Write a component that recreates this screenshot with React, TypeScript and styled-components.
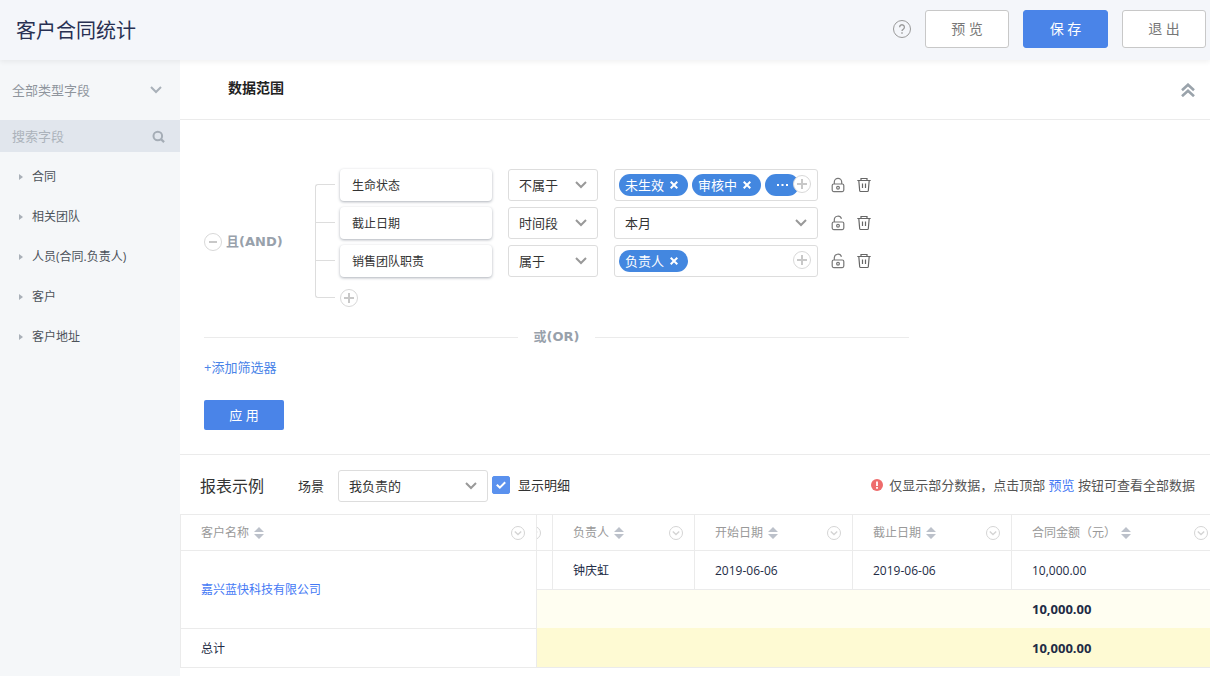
import React from "react";
import styled, { createGlobalStyle, css } from "styled-components";

const GlobalStyle = createGlobalStyle`
  *, *::before, *::after { box-sizing: border-box; }
  body {
    margin: 0;
    background: #fff;
    color: #333;
    font-family: "Open Sans", "Noto Sans CJK SC", sans-serif;
    font-size: 13px;
    line-height: 20px;
  }
  button, input, select { font: inherit; color: inherit; margin: 0; }
  button { cursor: pointer; }
  a { text-decoration: none; }
  h1, h2, ul { margin: 0; padding: 0; }
  svg { display: block; flex: none; }
`;

const Page = styled.div`
  display: flex;
  flex-direction: column;
  min-height: 100vh;
`;

const Header = styled.header`
  display: flex;
  align-items: center;
  gap: 14px;
  height: 60px;
  padding: 0 4px 2px 16px;
  background: #f4f6fa;
  box-shadow: 0 2px 5px rgba(0, 0, 0, 0.06);
  position: relative;
  z-index: 1;
`;

const PageTitle = styled.h1`
  flex: 1;
  padding-top: 4px;
  font-size: 20px;
  line-height: 30px;
  font-weight: 400;
  color: #283052;
`;

const IconButton = styled.button`
  display: grid;
  place-items: center;
  padding: 0;
  border: 0;
  background: none;
`;

const HeaderButton = styled.button<{ $primary?: boolean }>`
  width: ${(p) => (p.$primary ? "85px" : "84px")};
  height: 38px;
  padding: 0;
  border: 1px solid ${(p) => (p.$primary ? "#4a84e8" : "#c8c8c8")};
  border-radius: 3px;
  background: ${(p) => (p.$primary ? "#4a84e8" : "#fff")};
  color: ${(p) => (p.$primary ? "#fff" : "#777")};
  font-size: 14px;
`;

const Body = styled.div`
  display: flex;
  flex: 1;
`;

const Sidebar = styled.aside`
  flex: none;
  width: 180px;
  background: #f5f7f9;
`;

const SelectBox = styled.label<{ $width?: string }>`
  display: grid;
  align-items: center;
  flex: none;
  width: ${(p) => p.$width ?? "100%"};
  > * { grid-area: 1 / 1; }
  > svg { justify-self: end; margin-right: 11px; pointer-events: none; }
`;

const selectReset = css`
  appearance: none;
  width: 100%;
  outline: 0;
`;

const TypeSelect = styled.select`
  ${selectReset}
  height: 60px;
  padding: 0 12px;
  border: 0;
  background: transparent;
  color: #8f959d;
`;

const TypeBox = styled(SelectBox)`
  > svg { margin-right: 18px; }
`;

const Select = styled.select`
  ${selectReset}
  height: 32px;
  padding: 0 10px;
  border: 1px solid #ddd;
  border-radius: 3px;
  background: #fff;
  color: #333;
`;

const SearchBox = styled.label`
  display: flex;
  align-items: center;
  height: 32px;
  padding: 0 15px 0 12px;
  background: #e1e6ed;
  input {
    flex: 1;
    min-width: 0;
    padding: 0;
    border: 0;
    outline: 0;
    background: transparent;
    &::placeholder { color: #acb3bb; opacity: 1; }
  }
`;

const FieldTree = styled.ul`
  padding-top: 5px;
  list-style: none;
`;

const FieldButton = styled.button`
  display: flex;
  align-items: center;
  gap: 9px;
  width: 100%;
  height: 40px;
  padding: 0 19px;
  border: 0;
  background: none;
  color: #4c5259;
  font-size: 12px;
`;

const Main = styled.main`
  flex: 1;
  min-width: 0;
`;

const SectionHeader = styled.div`
  display: flex;
  align-items: center;
  justify-content: space-between;
  height: 60px;
  padding: 0 15px 0 48px;
  border-bottom: 1px solid #ebebeb;
`;

const SectionTitle = styled.h2`
  padding-bottom: 4px;
  font-size: 14px;
  font-weight: 700;
  color: #222;
`;

const FilterPanel = styled.section`
  padding: 48px 24px 24px;
  border-bottom: 1px solid #ebebeb;
`;

const FilterGroup = styled.div`
  display: flex;
`;

const GroupLabel = styled.div`
  display: flex;
  align-items: center;
  gap: 4px;
  width: 111px;
  padding-top: 8px;
`;

const Operator = styled.strong`
  font-family: "DejaVu Sans", "Noto Sans CJK SC", sans-serif;
  font-weight: 700;
  color: #98a1ab;
`;

const Bracket = styled.div`
  width: 20px;
  height: 114px;
  margin: 16px 5px 0 0;
  border: 1px solid #ddd;
  border-right: 0;
  border-radius: 3px 0 0 3px;
`;

const Branch = styled.div`
  height: 38px;
  border-bottom: 1px solid #ddd;
  &:last-child { border-bottom: 0; }
`;

const Conditions = styled.div`
  display: flex;
  flex-direction: column;
  align-items: flex-start;
  gap: 6px;
  padding-top: 1px;
`;

const Condition = styled.div`
  display: flex;
  align-items: center;
  height: 32px;
`;

const FieldCard = styled.div`
  width: 152px;
  height: 32px;
  margin-right: 16px;
  padding: 7px 12px 5px;
  border-radius: 4px;
  background: #fff;
  box-shadow: 0 1px 3px rgba(40, 50, 70, 0.38);
  font-size: 12px;
`;

const ValueArea = styled.div`
  width: 204px;
  margin: 0 13px 0 16px;
`;

const TagField = styled.div`
  position: relative;
  display: flex;
  align-items: center;
  gap: 4px;
  height: 32px;
  padding: 0 4px;
  border: 1px solid #ddd;
  border-radius: 3px;
`;

const Tag = styled.span`
  display: flex;
  align-items: center;
  gap: 6px;
  height: 22px;
  padding: 0 10px 0 6px;
  border-radius: 11px;
  background: #4387e0;
  color: #fff;
  white-space: nowrap;
`;

const MoreTag = styled(Tag)`
  width: 34px;
  padding-left: 12px;
`;

const AddValue = styled(IconButton)`
  position: absolute;
  top: 5px;
  right: 6px;
`;

const AddCondition = styled(IconButton)`
  margin-top: 6px;
`;

const RowActions = styled.div`
  display: flex;
  gap: 12px;
`;

const OrDivider = styled.div`
  display: flex;
  align-items: center;
  gap: 16px;
  max-width: 705px;
  margin-top: 20px;
  &::before, &::after {
    content: "";
    flex: 1;
    height: 1px;
    background: #ebebeb;
  }
`;

const AddFilter = styled.button`
  display: block;
  margin: 10px 0 23px;
  padding: 0;
  border: 0;
  background: none;
  color: #4a84e8;
`;

const ApplyButton = styled.button`
  width: 80px;
  height: 30px;
  padding: 0;
  border: 0;
  border-radius: 2px;
  background: #4a84e8;
  color: #fff;
`;

const ReportBar = styled.div`
  display: flex;
  align-items: center;
  height: 59px;
  padding: 2px 15px 0 20px;
`;

const ReportTitle = styled.h2`
  margin-right: 34px;
  font-size: 16px;
  font-weight: 400;
`;

const SceneLabel = styled.label`
  margin-right: 14px;
`;

const CheckLabel = styled.label`
  display: flex;
  align-items: center;
  gap: 8px;
  margin-left: 4px;
  padding-bottom: 2px;
`;

const CheckMark = styled.span`
  display: grid;
  place-items: center;
  > * { grid-area: 1 / 1; }
  svg { pointer-events: none; }
`;

const CheckInput = styled.input`
  appearance: none;
  width: 18px;
  height: 18px;
  border: 1px solid #ccc;
  border-radius: 2px;
  &:checked { border-color: #5a91ee; background: #5a91ee; }
  &:not(:checked) + svg { display: none; }
`;

const Notice = styled.p`
  display: flex;
  align-items: center;
  gap: 6px;
  margin: 0 0 0 auto;
  padding-bottom: 2px;
  color: #555;
  a { color: #4579f5; }
`;

const Tables = styled.div`
  display: flex;
`;

const Table = styled.table`
  flex: none;
  border-collapse: separate;
  border-spacing: 0;
  table-layout: fixed;
  font-size: 12px;
  color: #222b45;
  border-top: 1px solid #ebebeb;

  th, td {
    height: 39px;
    padding: 1px 0 0 20px;
    border-right: 1px solid #ebebeb;
    border-bottom: 1px solid #ebebeb;
    text-align: left;
    font-weight: 400;
  }
  thead th { height: 36px; padding-top: 0; color: #999; }
`;

const FrozenTable = styled(Table)`
  width: 357px;
  border-left: 1px solid #ebebeb;
  tbody td { height: 78px; }
  tbody a { color: #4579f5; }
`;

const Scroller = styled.div`
  flex: 1;
  min-width: 0;
  overflow: hidden;
`;

const DetailTable = styled(Table)`
  width: 100%;
  min-width: 683px;
`;

const SummaryRow = styled.tr<{ $total?: boolean }>`
  && td {
    padding-top: 0;
    border-right: 0;
    border-bottom-color: ${(p) => (p.$total ? "#ebebeb" : "#fefad3")};
    background: ${(p) => (p.$total ? "#fefad3" : "#fffef1")};
    font-size: 13px;
    font-weight: 700;
  }
`;

const HeadCell = styled.div`
  display: flex;
  align-items: center;
  gap: 5px;
  padding-right: 11px;
  > :last-child { margin-left: auto; }
`;

const ClippedHead = styled.div`
  display: flex;
  justify-content: flex-end;
  width: 4px;
  margin-left: -20px;
  overflow: hidden;
`;

const Chevron = ({ color = "#999" }: { color?: string }) => (
  <svg width="12" height="8" viewBox="0 0 12 8" fill="none" stroke={color} strokeWidth="2">
    <path d="M1 1l5 5 5-5" />
  </svg>
);

const CircleSign = ({ plus }: { plus?: boolean }) => (
  <svg width="18" height="18" viewBox="0 0 18 18" fill="#fff">
    <circle cx="9" cy="9" r="8.5" stroke="#d8d8d8" />
    <path d={plus ? "M4 9h10M9 4v10" : "M5 9h8"} stroke="#c8c8c8" strokeWidth="2" />
  </svg>
);

const LockIcon = ({ open }: { open?: boolean }) => (
  <svg width="14" height="16" viewBox="0 0 14 16" fill="none" stroke="#777" strokeWidth="1.2">
    <rect x="1.2" y="7" width="11.6" height="7.600" rx="1.500" />
    <path d={open ? "M3.300 7V5a3.700 3.700 0 0 1 7.200-1.300" : "M3.300 7V5a3.700 3.700 0 0 1 7.400 0v2"} />
    <circle cx="7" cy="10.700" r="1.400" />
  </svg>
);

const TrashIcon = () => (
  <svg width="14" height="16" viewBox="0 0 14 16" fill="none" stroke="#666" strokeWidth="1.2">
    <path d="M0.300 3.500h13.400M4 3.500v-2h6v2M1.800 3.500l.9 10.200q.1.800.9.800h6.800q.8 0 .9-.8L12.200 3.500M5.500 6.500v4.500M8.500 6.500v4.500" />
  </svg>
);

const Cross = () => (
  <svg width="8" height="8" viewBox="0 0 8 8" fill="none" stroke="#fff" strokeWidth="2">
    <path d="M0.700 0.700l6.600 6.600M7.300 0.700L0.700 7.300" />
  </svg>
);

const SortIcon = () => (
  <svg width="10" height="12" viewBox="0 0 10 12" fill="#bcc1ca">
    <path d="M5 0l5 5H0zM0 7h10l-5 5z" />
  </svg>
);

const MenuIcon = () => (
  <svg width="14" height="14" viewBox="0 0 14 14" fill="none" stroke="#d4d4d4">
    <circle cx="7" cy="7" r="6.500" />
    <path d="M3.800 5.500L7 8.500l3.200-3" strokeWidth="1.400" />
  </svg>
);

const RemovableTag = ({ children }: { children: string }) => (
  <Tag>
    {children}
    <IconButton aria-label="移除">
      <Cross />
    </IconButton>
  </Tag>
);

const ColumnHead = ({ children }: { children: string }) => (
  <th scope="col">
    <HeadCell>
      {children}
      <SortIcon />
      <IconButton aria-label="列菜单">
        <MenuIcon />
      </IconButton>
    </HeadCell>
  </th>
);

interface ConditionRowProps {
  field: string;
  operator: string;
  locked?: boolean;
  children: React.ReactNode;
}

const ConditionRow = ({ field, operator, locked, children }: ConditionRowProps) => (
  <Condition>
    <FieldCard>{field}</FieldCard>
    <SelectBox $width="90px">
      <Select aria-label={field}>
        <option>{operator}</option>
      </Select>
      <Chevron />
    </SelectBox>
    <ValueArea>{children}</ValueArea>
    <RowActions>
      <IconButton aria-label="锁定">
        <LockIcon open={!locked} />
      </IconButton>
      <IconButton aria-label="删除">
        <TrashIcon />
      </IconButton>
    </RowActions>
  </Condition>
);

const fields = ["合同", "相关团队", "人员(合同.负责人)", "客户", "客户地址"];

export default function App() {
  return (
    <Page>
      <GlobalStyle />
      <Header>
        <PageTitle>客户合同统计</PageTitle>
        <IconButton aria-label="帮助">
          <svg width="18" height="18" viewBox="0 0 18 18" fill="none" stroke="#999">
            <circle cx="9" cy="9" r="8.500" />
            <path d="M6.600 7.200a2.400 2.400 0 1 1 3.700 2c-.8.500-1.300.9-1.300 1.900" strokeWidth="1.300" />
            <path d="M9 12.300v1.500" strokeWidth="1.400" />
          </svg>
        </IconButton>
        <HeaderButton>预 览</HeaderButton>
        <HeaderButton $primary>保 存</HeaderButton>
        <HeaderButton>退 出</HeaderButton>
      </Header>
      <Body>
        <Sidebar>
          <TypeBox>
            <TypeSelect aria-label="字段类型">
              <option>全部类型字段</option>
            </TypeSelect>
            <Chevron color="#a9b1b9" />
          </TypeBox>
          <SearchBox>
            <input type="text" placeholder="搜索字段" aria-label="搜索字段" />
            <svg width="13" height="13" viewBox="0 0 13 13" fill="none" stroke="#a5adb6" strokeWidth="2">
              <circle cx="5.800" cy="6" r="4.300" />
              <path d="M8.900 9.100l3.200 3" strokeWidth="2.200" />
            </svg>
          </SearchBox>
          <FieldTree>
            {fields.map((name) => (
              <li key={name}>
                <FieldButton>
                  <svg width="4" height="6" viewBox="0 0 4 6" fill="#a9b0b8">
                    <path d="M0 0l4 3-4 3z" />
                  </svg>
                  {name}
                </FieldButton>
              </li>
            ))}
          </FieldTree>
        </Sidebar>
        <Main>
          <SectionHeader>
            <SectionTitle>数据范围</SectionTitle>
            <IconButton aria-label="收起">
              <svg width="14" height="14" viewBox="0 0 14 14" fill="none" stroke="#9aa3ab" strokeWidth="2.600">
                <path d="M1 7.200l6-5.500 6 5.500M1 13.200l6-5.500 6 5.500" />
              </svg>
            </IconButton>
          </SectionHeader>
          <FilterPanel>
            <FilterGroup>
              <GroupLabel>
                <IconButton aria-label="移除条件组">
                  <CircleSign />
                </IconButton>
                <Operator>且(AND)</Operator>
              </GroupLabel>
              <Bracket>
                <Branch />
                <Branch />
                <Branch />
              </Bracket>
              <Conditions>
                <ConditionRow field="生命状态" operator="不属于" locked>
                  <TagField>
                    <RemovableTag>未生效</RemovableTag>
                    <RemovableTag>审核中</RemovableTag>
                    <MoreTag>
                      <svg width="11" height="2" viewBox="0 0 11 2" fill="#fff">
                        <path d="M0 0h2v2H0zM4.500 0h2v2h-2zM9 0h2v2H9z" />
                      </svg>
                    </MoreTag>
                    <AddValue aria-label="添加值">
                      <CircleSign plus />
                    </AddValue>
                  </TagField>
                </ConditionRow>
                <ConditionRow field="截止日期" operator="时间段">
                  <SelectBox>
                    <Select aria-label="时间段">
                      <option>本月</option>
                    </Select>
                    <Chevron />
                  </SelectBox>
                </ConditionRow>
                <ConditionRow field="销售团队职责" operator="属于">
                  <TagField>
                    <RemovableTag>负责人</RemovableTag>
                    <AddValue aria-label="添加值">
                      <CircleSign plus />
                    </AddValue>
                  </TagField>
                </ConditionRow>
                <AddCondition aria-label="添加条件">
                  <CircleSign plus />
                </AddCondition>
              </Conditions>
            </FilterGroup>
            <OrDivider>
              <Operator>或(OR)</Operator>
            </OrDivider>
            <AddFilter>+添加筛选器</AddFilter>
            <ApplyButton>应 用</ApplyButton>
          </FilterPanel>
          <section>
            <ReportBar>
              <ReportTitle>报表示例</ReportTitle>
              <SceneLabel htmlFor="scene">场景</SceneLabel>
              <SelectBox $width="150px">
                <Select id="scene">
                  <option>我负责的</option>
                </Select>
                <Chevron />
              </SelectBox>
              <CheckLabel>
                <CheckMark>
                  <CheckInput type="checkbox" defaultChecked />
                  <svg width="10" height="8" viewBox="0 0 10 8" fill="none" stroke="#fff" strokeWidth="2">
                    <path d="M0.800 3.800l3 2.800 5.400-5.400" />
                  </svg>
                </CheckMark>
                显示明细
              </CheckLabel>
              <Notice>
                <svg width="12" height="12" viewBox="0 0 12 12">
                  <circle cx="6" cy="6" r="6" fill="#ee6b6b" />
                  <path d="M6 2.500v4.500M6 8v1.800" stroke="#fff" strokeWidth="1.800" />
                </svg>
                <span>
                  仅显示部分数据，点击顶部 <a href="#preview">预览</a> 按钮可查看全部数据
                </span>
              </Notice>
            </ReportBar>
            <Tables>
              <FrozenTable>
                <thead>
                  <tr>
                    <ColumnHead>客户名称</ColumnHead>
                  </tr>
                </thead>
                <tbody>
                  <tr>
                    <td>
                      <a href="#customer">嘉兴蓝快科技有限公司</a>
                    </td>
                  </tr>
                </tbody>
                <tfoot>
                  <tr>
                    <th scope="row">总计</th>
                  </tr>
                </tfoot>
              </FrozenTable>
              <Scroller>
                <DetailTable>
                  <colgroup>
                    <col width="16" />
                    <col width="142" />
                    <col width="158" />
                    <col width="159" />
                    <col />
                  </colgroup>
                  <thead>
                    <tr>
                      <th>
                        <ClippedHead>
                          <MenuIcon />
                        </ClippedHead>
                      </th>
                      <ColumnHead>负责人</ColumnHead>
                      <ColumnHead>开始日期</ColumnHead>
                      <ColumnHead>截止日期</ColumnHead>
                      <ColumnHead>合同金额（元）</ColumnHead>
                    </tr>
                  </thead>
                  <tbody>
                    <tr>
                      <td />
                      <td>钟庆虹</td>
                      <td>2019-06-06</td>
                      <td>2019-06-06</td>
                      <td>10,000.00</td>
                    </tr>
                    <SummaryRow>
                      <td colSpan={4} />
                      <td>10,000.00</td>
                    </SummaryRow>
                    <SummaryRow $total>
                      <td colSpan={4} />
                      <td>10,000.00</td>
                    </SummaryRow>
                  </tbody>
                </DetailTable>
              </Scroller>
            </Tables>
          </section>
        </Main>
      </Body>
    </Page>
  );
}
